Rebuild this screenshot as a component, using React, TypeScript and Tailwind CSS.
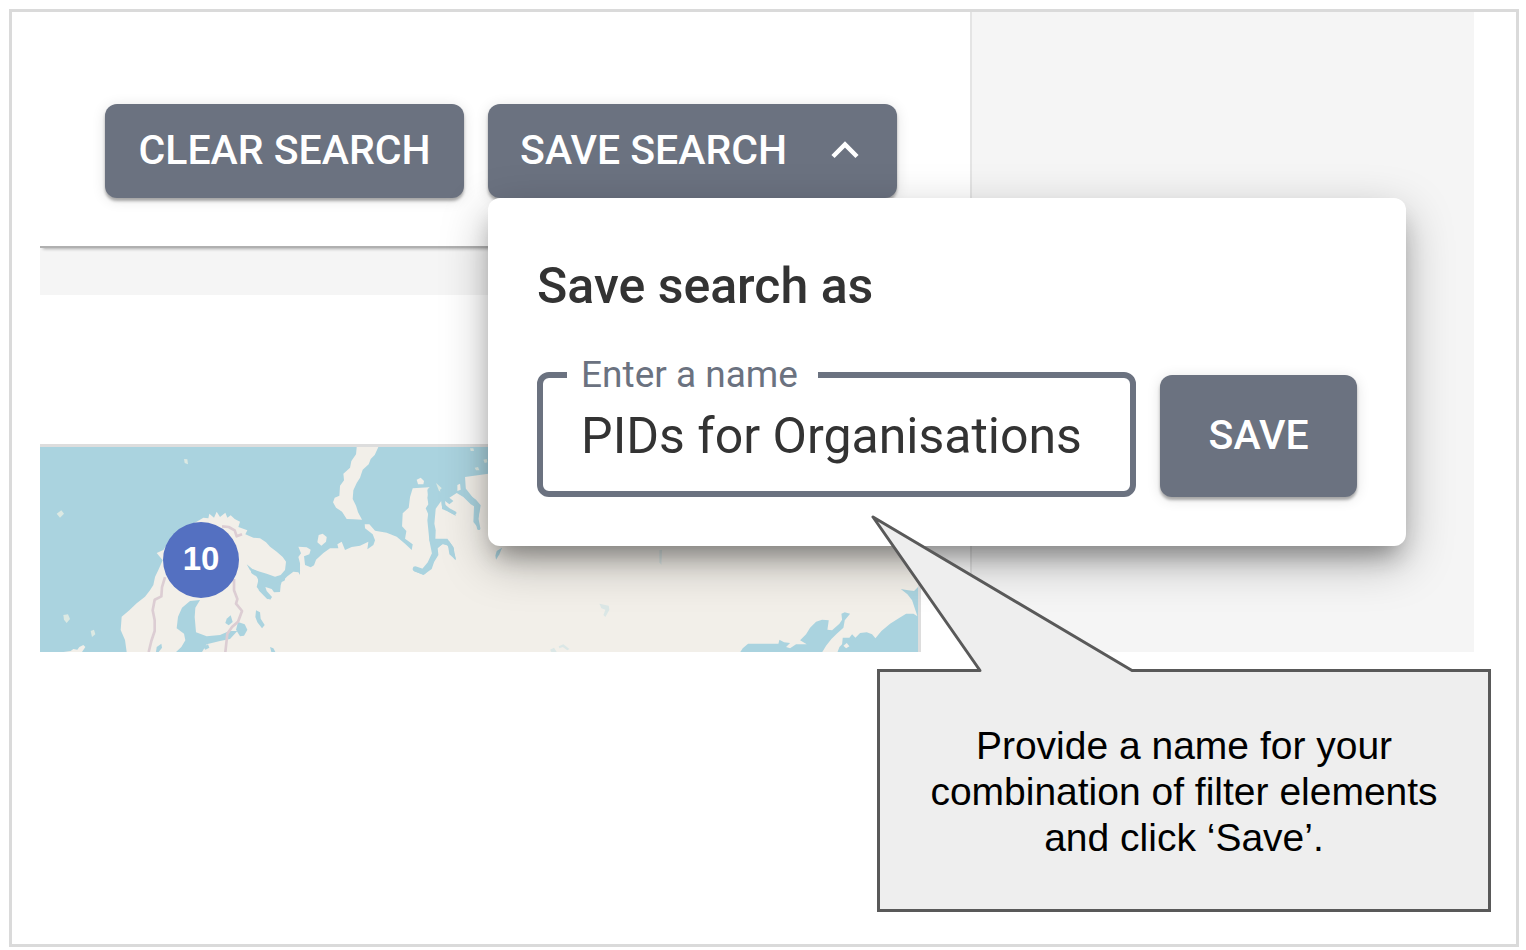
import { useState } from "react";

const buttonBase =
  "flex items-center rounded-xl bg-[#6b7280] pb-[2px] text-[41px] leading-[48px] font-medium uppercase text-white shadow-[0_3px_3px_rgba(0,0,0,0.3),0_2px_14px_rgba(0,0,0,0.12)]";

function MapTiles() {
  return (
    <svg
      className="block h-full w-full bg-[#aad3df]"
      viewBox="0 0 2634 615"
      preserveAspectRatio="xMinYMin slice"
      aria-hidden="true"
    >
      <g fill="#f2efe9">
        <path d="M260 615L255 579L242 549L245 509L268 490L290 469L315 449L330 430L340 414L345 390L355 369L368 340L350 318L370 309L388 282L410 259L440 238L470 224L490 212L505 214L508 200L522 212L530 194L540 210L556 197L562 212L572 205L584 216L600 224L595 240L622 250L616 262L640 272L660 274L678 286L690 299L710 314L728 330L738 344L735 369L722 384L705 389L680 380L660 374L640 368L620 352L630 370L648 384L655 400L650 420L662 435L676 440L690 459L696 450L680 432L676 420L695 426L702 436L720 435L722 415L725 405L742 388L760 374L775 376L780 384L780 349L775 330L783 319L775 299L800 301L812 308L808 322L792 328L795 354L812 361L822 355L828 338L850 318L870 304L895 304L892 292L905 284L915 309L935 300L960 296L985 284L982 307L1000 294L1005 280L998 262L975 244L974 232L988 232L1005 251L1040 257L1070 269L1095 290L1115 309L1118 292L1095 275L1099 252L1086 238L1088 199L1106 182L1110 150L1118 124L1168 121L1162 152L1165 172L1157 184L1172 219L1168 279L1182 319L1175 344L1150 369L1120 359L1122 372L1150 384L1175 366L1182 345L1195 324L1193 304L1208 290L1224 296L1228 322L1248 340L1240 300L1222 275L1186 275L1187 250L1183 230L1187 185L1205 160L1206 186L1222 193L1248 207L1240 194L1217 181L1215 162L1228 172L1240 162L1228 152L1250 138L1270 150L1292 172L1302 178L1300 225L1320 250L1314 220L1322 175L1308 158L1278 136L1275 90L1345 80H2634V615Z" />
        <path d="M950 0H1015L1004 24L992 36L986 52L968 68L960 92L950 108L940 130L938 156L948 176L954 196L966 218L940 217L920 216L906 194L888 182L879 166L884 152L898 146L900 116L912 100L910 80L930 62L934 42L948 22Z" />
        <path d="M836 264L848 260L860 270L858 284L844 296L832 286Z" />
        <path d="M1130 98L1142 92L1152 102L1150 112L1134 112Z" />
        <path d="M1252 114L1260 110L1262 128L1252 132Z" />
        <path d="M70 615L92 612L100 606L112 608L118 600L130 594L136 600L126 615Z" />
      </g>
      <g fill="#dce9e3">
        <path d="M432 36L442 37L444 52L434 48Z" />
        <path d="M50 200L64 190L72 200L60 212Z" />
        <path d="M70 504L84 502L90 516L80 528L72 518Z" />
        <path d="M152 552L162 548L166 562L156 570Z" />
        <path d="M1188 108L1204 122L1206 140L1196 130Z" />
        <path d="M1290 4L1300 4L1302 12L1292 12ZM1330 38L1340 36L1342 46L1334 48ZM1304 62L1314 60L1318 70L1308 70Z" />
      </g>
      <g fill="none" stroke="#aad3df" strokeWidth="16" strokeLinejoin="round" strokeLinecap="round">
        <path d="M1170 130L1175 180L1170 220L1176 280L1184 320L1170 350L1150 374L1126 366" />
        <path d="M1184 300L1206 285L1224 288L1236 306" strokeWidth="12" />
        <path d="M1236 306L1244 334" strokeWidth="5" />
        <path d="M1205 130L1210 175L1226 188L1244 198" strokeWidth="10" />
        <path d="M1275 130L1300 162L1314 182L1310 214L1316 244" strokeWidth="10" />
        <path d="M640 374L668 392L700 404L728 396" strokeWidth="14" />
        <path d="M660 400L662 428L684 450" strokeWidth="12" />
      </g>
      <g fill="#aad3df">
        <path d="M480 459L450 462L426 482L414 509L410 544L432 560L436 580L424 600L408 615H486L500 592L540 582L570 576L592 552L568 552L540 564L500 568L468 556L464 510L466 482Z" />
        <path d="M594 525L614 532L622 548L612 566L600 568L588 548Z" />
        <path d="M648 490L660 496L662 515L674 534L666 544L652 526L646 510Z" />
        <path d="M560 515L572 505L578 525L566 535L556 528Z" />
        <path d="M350 600L364 590L366 602L356 615H348Z" />
        <path d="M490 600L504 592L508 602L496 608Z" />
        <path d="M690 600L700 604L706 615H694Z" />
        <path d="M1370 312L1386 302L1378 322L1368 338L1366 326Z" />
        <path d="M2100 616L2108 604L2124 590L2215 590L2218 578L2232 586L2250 588L2238 600L2250 604L2268 592L2300 592L2280 580L2298 562L2310 542L2328 524L2346 518L2366 520L2362 548L2376 550L2398 530L2406 518L2404 500L2414 496L2430 500L2414 520L2410 542L2390 560L2374 576L2358 596L2346 616Z" />
        <path d="M2392 616L2398 600L2406 592L2408 572L2428 572L2436 562L2446 572L2460 558L2480 556L2496 562L2506 574L2524 552L2550 530L2576 514L2598 500L2620 500L2632 508L2624 484L2616 460L2602 442L2582 426L2604 430L2622 432L2636 418V616Z" />
      </g>
      <path d="M2410 596L2420 588L2428 598L2418 604Z" fill="#f2efe9" />
      <g fill="#dbe7e6">
        <path d="M1678 470L1706 476L1708 488L1696 510L1690 504L1696 488L1684 484Z" />
        <path d="M1858 310L1866 308L1864 354L1858 346Z" />
        <path d="M1530 608L1542 602L1550 615H1534ZM1556 598L1570 592L1588 606L1582 610L1568 600L1558 604Z" />
      </g>
      <g fill="none" stroke="#dccdd3" strokeWidth="8" strokeLinejoin="round">
        <path d="M375 390L366 420L364 448L344 458L338 490L344 520L344 552L334 582L326 615" />
        <path d="M582 396L582 430L592 456L588 470L606 492L594 524L576 540L562 560L556 615" />
        <path d="M546 238L566 240L584 250L590 268L606 262" />
      </g>
    </svg>
  );
}

function SavePopover() {
  const [name, setName] = useState("PIDs for Organisations");
  return (
    <form
      onSubmit={(e) => e.preventDefault()}
      className="absolute top-full left-0 z-10 w-[918px] rounded-xl bg-white px-[49px] pt-[60px] pb-[49px] shadow-[0_16px_24px_-8px_rgba(0,0,0,0.32),0_16px_48px_rgba(0,0,0,0.28)]"
    >
      <h2 className="text-[50px] leading-[56px] font-medium text-[#333333]">Save search as</h2>
      <div className="mt-[37px] flex items-end gap-6">
        <fieldset className="h-[146px] min-w-0 flex-1 rounded-xl border-[6px] border-[#6b7280] pr-5 pl-6">
          <legend className="h-[48px] pr-5 pl-[14px] text-[37px] leading-[48px] text-[#6b7280]">
            <label htmlFor="search-name">Enter a name</label>
          </legend>
          <input
            id="search-name"
            type="text"
            value={name}
            onChange={(e) => setName(e.target.value)}
            className="block h-[74px] w-full px-[14px] text-[50px] leading-[60px] text-[#333333] outline-none"
          />
        </fieldset>
        <button type="submit" className={`${buttonBase} h-[122px] w-[197px] justify-center`}>
          Save
        </button>
      </div>
    </form>
  );
}

function Callout() {
  return (
    <aside className="relative z-20 mt-[17px] mr-[25px] ml-auto flex h-[243px] w-[614px] items-center justify-center border-[3px] border-[#595959] bg-[#eeeeee] px-10 pt-[3px] text-center font-['Liberation_Sans',sans-serif]">
      <svg
        className="absolute -top-[157px] -left-[11px]"
        width="270"
        height="160"
        viewBox="0 0 270 160"
        aria-hidden="true"
      >
        <path d="M110 160L111 155.500L4 2L263 155.500L264 160Z" fill="#eeeeee" />
        <path
          d="M102 155.500H111L4 2L263 155.500H268"
          fill="none"
          stroke="#595959"
          strokeWidth="3"
          strokeLinejoin="round"
        />
      </svg>
      <p className="text-[39px] leading-[46px] text-black">
        Provide a name for your
        <br />
        combination of filter elements
        <br />
        and click ‘Save’.
      </p>
    </aside>
  );
}

export default function App() {
  return (
    <div className="flex min-h-screen flex-col bg-white pt-[9px] pr-[7px] pb-[3px] pl-[9px] font-[Roboto,sans-serif]">
      <div className="flex grow flex-col border-[3px] border-[#dadada]">
        <div className="mr-[42px] ml-7 bg-[#f5f5f5]">
          <main className="w-[65%] border-r-2 border-[#e4e4e4]">
            <header className="flex justify-end gap-6 border-b-2 border-[#b0b0b0] bg-white pt-[92px] pr-[73px] pb-12 shadow-[0_4px_3px_-3px_rgba(0,0,0,0.3)]">
              <button
                type="button"
                className={`${buttonBase} h-[94px] w-[359px] justify-center`}
              >
                Clear search
              </button>
              <div className="relative">
                <button
                  type="button"
                  aria-expanded="true"
                  className={`${buttonBase} h-[94px] w-[409px] justify-between pr-9 pl-8`}
                >
                  Save search
                  <svg width="32" height="32" viewBox="0 0 32 32" fill="none" aria-hidden="true">
                    <path d="M4 22.500L16 10.500L28 22.500" stroke="#ffffff" strokeWidth="4.500" />
                  </svg>
                </button>
                <SavePopover />
              </div>
            </header>
            <section className="mt-[47px] bg-white pt-[149px] pr-[49px]">
              <div className="relative h-[208px] border-t-[3px] border-r-[3px] border-[#dddddd]">
                <MapTiles />
                <button
                  type="button"
                  className="absolute top-[75px] left-[123px] flex size-[76px] items-center justify-center rounded-full bg-[#5470c1] pb-[2px] font-['Liberation_Sans',sans-serif] text-[33px] leading-[40px] font-bold text-white"
                >
                  10
                </button>
              </div>
            </section>
          </main>
        </div>
        <Callout />
      </div>
    </div>
  );
}
